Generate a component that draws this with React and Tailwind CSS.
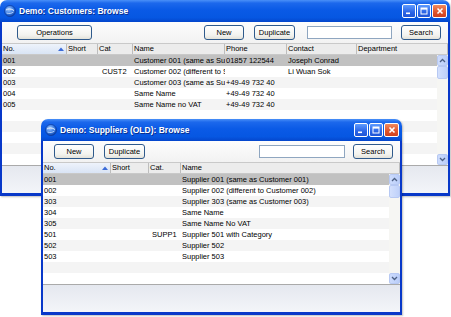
import React from 'react';

const backCols = [
  { label: 'No.', w: 'w-[65px]', sort: true, pad: 'pl-[1px]' },
  { label: 'Short', w: 'w-[31px]', pad: 'pl-[1px]' },
  { label: 'Cat', w: 'w-[35px]', pad: 'pl-[4px]' },
  { label: 'Name', w: 'w-[92px]', pad: 'pl-[1px]' },
  { label: 'Phone', w: 'w-[62px]', pad: 'pl-[1px]' },
  { label: 'Contact', w: 'w-[70px]', pad: 'pl-[1px]' },
  { label: 'Department', w: 'flex-1', pad: 'pl-[1px]' },
];

const backRows = [
  ['001', '', '', 'Customer 001 (same as Supplier 001)', '01857 122544', 'Joseph Conrad', ''],
  ['002', '', 'CUST2', 'Customer 002 (different to Supplier 002)', '', 'Li Wuan Sok', ''],
  ['003', '', '', 'Customer 003 (same as Supplier 003)', '+49-49 732 40', '', ''],
  ['004', '', '', 'Same Name', '+49-49 732 40', '', ''],
  ['005', '', '', 'Same Name no VAT', '+49-49 732 40', '', ''],
];

const frontCols = [
  { label: 'No.', w: 'w-[68px]', sort: true, pad: 'pl-[1px]' },
  { label: 'Short', w: 'w-[38px]', pad: 'pl-[1px]' },
  { label: 'Cat.', w: 'w-[32px]', pad: 'pl-[3px]' },
  { label: 'Name', w: 'flex-1', pad: 'pl-[1px]' },
];

const frontRows = [
  ['001', '', '', 'Supplier 001 (same as Customer 001)'],
  ['002', '', '', 'Supplier 002 (different to Customer 002)'],
  ['303', '', '', 'Supplier 303 (same as Customer 003)'],
  ['304', '', '', 'Same Name'],
  ['305', '', '', 'Same Name No VAT'],
  ['501', '', 'SUPP1', 'Supplier 501 with Category'],
  ['502', '', '', 'Supplier 502'],
  ['503', '', '', 'Supplier 503'],
];

function Globe() {
  return (
    <svg width="12" height="12" viewBox="0 0 12 12" className="shrink-0">
      <defs>
        <radialGradient id="g" cx="0.4" cy="0.35" r="0.7">
          <stop offset="0" stopColor="#9cc6ff" />
          <stop offset="0.6" stopColor="#3477e0" />
          <stop offset="1" stopColor="#0d3c9e" />
        </radialGradient>
      </defs>
      <circle cx="6" cy="6" r="5.5" fill="url(#g)" stroke="#0a3390" strokeWidth="0.6" />
      <path d="M2 5 C4 3.5 7 3.5 10 5.5" stroke="#e8f2ff" strokeWidth="1" fill="none" />
      <path d="M2.5 8 C5 9 7.5 8.5 9.5 7" stroke="#cfe3ff" strokeWidth="0.8" fill="none" />
    </svg>
  );
}

function TitleButtons() {
  const blue = 'w-[14px] h-[14px] rounded-[2px] border border-white bg-[linear-gradient(180deg,#5e9bff,#2a64e6_60%,#1f55d6)] flex items-center justify-center';
  return (
    <div className="flex gap-[1px] pr-[3px]">
      <div className={blue}>
        <svg width="10" height="10" viewBox="0 0 10 10"><rect x="2" y="6.5" width="4" height="1.6" fill="#fff" /></svg>
      </div>
      <div className={blue}>
        <svg width="10" height="10" viewBox="0 0 10 10"><rect x="2" y="2" width="6" height="6" fill="none" stroke="#fff" strokeWidth="1" /><rect x="2" y="2" width="6" height="1.6" fill="#fff" /></svg>
      </div>
      <div className="w-[15px] h-[14px] rounded-[2px] border border-white bg-[linear-gradient(180deg,#f08a5f,#e0532b_60%,#cc4020)] flex items-center justify-center">
        <svg width="10" height="10" viewBox="0 0 10 10"><path d="M2.5 2.5 L7.5 7.5 M7.5 2.5 L2.5 7.5" stroke="#fff" strokeWidth="1.6" /></svg>
      </div>
    </div>
  );
}

function Btn({ children, w }) {
  return (
    <div className={`${w} h-[15px] shrink-0 rounded-[3px] border border-[#2f5a8c] bg-[linear-gradient(180deg,#ffffff,#f3f3ef_70%,#e3e2da)] flex items-center justify-center text-[7.5px] text-black`}>
      {children}
    </div>
  );
}

function Field({ w }) {
  return <div className={`${w} h-[13px] shrink-0 bg-white border border-[#8fa6c0]`} />;
}

function Chevron({ up }) {
  return (
    <svg width="7" height="5" viewBox="0 0 7 5">
      <path d={up ? 'M1 4 L3.5 1.5 L6 4' : 'M1 1 L3.5 3.5 L6 1'} stroke="#4d6185" strokeWidth="1.3" fill="none" />
    </svg>
  );
}

function ScrollBar() {
  const btn = 'w-[11px] h-[11px] rounded-[2px] border border-[#b7c9f3] bg-[linear-gradient(90deg,#cddcfd,#b9cdf9)] flex items-center justify-center';
  return (
    <div className="w-[11px] shrink-0 flex flex-col bg-[#f6f6f3]">
      <div className={btn}><Chevron up /></div>
      <div className="w-[11px] h-[13px] rounded-[2px] border border-[#b7c9f3] bg-[linear-gradient(90deg,#d3e0fd,#bfd1fa)]" />
      <div className="flex-1" />
      <div className={btn}><Chevron /></div>
    </div>
  );
}

function SortArrow() {
  return (
    <svg width="6" height="4" viewBox="0 0 6 4" className="shrink-0">
      <path d="M0 4 L3 0.5 L6 4 Z" fill="#3b6bd8" />
    </svg>
  );
}

function Window({ title, cols, rows, toolbar, className }) {
  const all = [...rows];
  while (all.length < 10) all.push(cols.map(() => ''));
  return (
    <div className={`${className} flex flex-col rounded-t-[7px] overflow-hidden shadow-[1px_1px_2px_rgba(0,0,0,0.25)]`}>
      <div className="h-[22px] shrink-0 flex items-center pl-[4px] gap-[2px] bg-[linear-gradient(180deg,#4a90f8_0%,#1c68ec_14%,#0a5ae6_45%,#0657e2_80%,#0446cc_100%)]">
        <Globe />
        <div className="flex-1 text-white font-bold text-[8.5px] pl-[1px] [text-shadow:1px_1px_0_#0a2f8f] whitespace-nowrap">{title}</div>
        <TitleButtons />
      </div>
      <div className="flex-1 flex flex-col border-x-2 border-b-[3px] border-[#0838c9] bg-white">
        <div className="h-[21px] shrink-0 flex items-center bg-[linear-gradient(180deg,#fdfdfd,#f2f2f2)]">
          {toolbar}
        </div>
        <div className="h-[12px] shrink-0 flex bg-[#ececec] border-y border-[#c9c9c9] text-[7.5px] leading-[10px] text-black">
          {cols.map((c, i) => (
            <div
              key={i}
              className={`${c.w} shrink-0 flex items-center overflow-hidden whitespace-nowrap border-r border-[#bdbdbd] pl-[1px] ${c.sort ? 'bg-[linear-gradient(180deg,#eef3fb,#d9e4f5)] pr-[2px] justify-between' : ''}`}
            >
              <span>{c.label}</span>
              {c.sort && <SortArrow />}
            </div>
          ))}
        </div>
        <div className="h-[110px] shrink-0 flex">
          <div className="flex-1 flex flex-col overflow-hidden">
            {all.map((r, ri) => (
              <div
                key={ri}
                className={`h-[11px] shrink-0 flex text-[7.5px] leading-[11px] text-black ${ri === 0 && r[0] ? 'bg-[#c1c1c1]' : ri % 2 === 0 ? 'bg-[#f4f4f4]' : 'bg-white'}`}
              >
                {cols.map((c, ci) => (
                  <div key={ci} className={`${c.w} shrink-0 overflow-hidden whitespace-nowrap ${c.pad}`}>{r[ci]}</div>
                ))}
              </div>
            ))}
          </div>
          <ScrollBar />
        </div>
        <div className="flex-1 border-t border-[#aaaaaa] bg-[linear-gradient(180deg,#e5e8ef,#f3f5f9)]" />
      </div>
    </div>
  );
}

export default function App() {
  return (
    <div className="relative w-[451px] h-[317px] bg-white overflow-hidden font-['Liberation_Sans',Arial,sans-serif]">
      <Window
        className="absolute left-0 top-0 w-[450px] h-[196px]"
        title="Demo: Customers: Browse"
        cols={backCols}
        rows={backRows}
        toolbar={
          <div className="flex items-center pl-[15px]">
            <Btn w="w-[75px]">Operations</Btn>
            <div className="ml-[112px]"><Btn w="w-[40px]">New</Btn></div>
            <div className="ml-[10px]"><Btn w="w-[41px]">Duplicate</Btn></div>
            <div className="ml-[12px]"><Field w="w-[85px]" /></div>
            <div className="ml-[9px]"><Btn w="w-[40px]">Search</Btn></div>
          </div>
        }
      />
      <Window
        className="absolute left-[41px] top-[119px] w-[361px] h-[196px]"
        title="Demo: Suppliers (OLD): Browse"
        cols={frontCols}
        rows={frontRows}
        toolbar={
          <div className="flex items-center pl-[11px]">
            <Btn w="w-[40px]">New</Btn>
            <div className="ml-[10px]"><Btn w="w-[41px]">Duplicate</Btn></div>
            <div className="ml-[114px]"><Field w="w-[86px]" /></div>
            <div className="ml-[8px]"><Btn w="w-[40px]">Search</Btn></div>
          </div>
        }
      />
    </div>
  );
}
